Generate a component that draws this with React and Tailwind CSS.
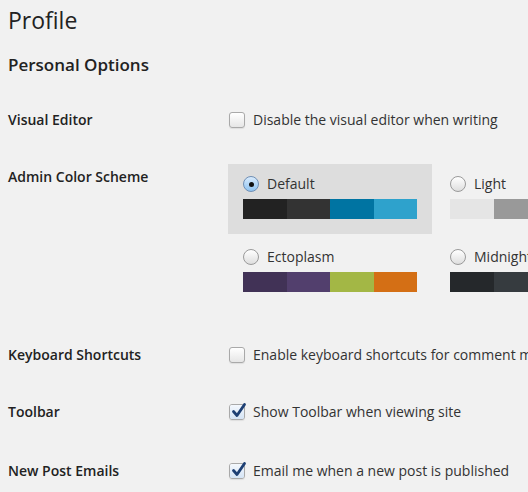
import React from "react";

const schemes = [
  [
    { name: "Default", checked: true, colors: ["#222222", "#333333", "#0074a2", "#2ea2cc"] },
    { name: "Light", colors: ["#e5e5e5", "#999999", "#d64e07", "#04a4cc"] },
  ],
  [
    { name: "Ectoplasm", colors: ["#413256", "#523f6d", "#a3b745", "#d46f15"] },
    { name: "Midnight", colors: ["#25282b", "#363b3f", "#69a8bb", "#e14d43"] },
  ],
];

function Checkbox({ checked }) {
  return (
    <span className="relative ml-[1px] inline-block h-[16px] w-[16px] shrink-0 rounded-[3px] border border-[#a9a9a9] bg-gradient-to-b from-white to-[#e6e6e6] shadow-[0_1px_1px_rgba(0,0,0,0.08)]">
      {checked && (
        <>
          <span className="absolute inset-0 rounded-[2px] bg-gradient-to-b from-[#f4f8fd] to-[#d5e4f5]" />
          <svg className="absolute left-[1px] top-[-3px]" width="16" height="17" viewBox="0 0 16 17">
            <path d="M2.5 9.5 L6 13.5 L13.5 2.5" fill="none" stroke="#1d3f73" strokeWidth="2.8" strokeLinecap="round" strokeLinejoin="round" />
          </svg>
        </>
      )}
    </span>
  );
}

function Radio({ checked }) {
  return checked ? (
    <span className="flex h-[16px] w-[16px] shrink-0 items-center justify-center rounded-full border border-[#6f8fb5] bg-gradient-to-b from-[#d9ebfc] to-[#8ec3f1]">
      <span className="h-[5px] w-[5px] rounded-full bg-[#111]" />
    </span>
  ) : (
    <span className="h-[16px] w-[16px] shrink-0 rounded-full border border-[#9a9a9a] bg-gradient-to-b from-white to-[#dedede]" />
  );
}

function ColorOption({ name, colors, checked }) {
  return (
    <div className={`w-[204px] shrink-0 px-[15px] pt-[12px] pb-[15px] ${checked ? "bg-[#dddddd]" : ""}`}>
      <div className="flex h-[16px] items-center gap-[8px]">
        <Radio checked={checked} />
        <span className="text-[14px] leading-[16px] text-[#333]">{name}</span>
      </div>
      <div className="mt-[7px] flex h-[20px] w-[174px]">
        {colors.map((c, i) => (
          <div key={i} className="h-full flex-1" style={{ background: c }} />
        ))}
      </div>
    </div>
  );
}

function Row({ label, children, className = "", labelClass = "" }) {
  return (
    <div className={`flex items-start ${className}`}>
      <div className={`w-[220px] shrink-0 text-[14px] font-semibold leading-[18px] text-[#222] ${labelClass}`}>{label}</div>
      <div className="min-w-0">{children}</div>
    </div>
  );
}

function CheckRow({ checked, text }) {
  return (
    <div className="flex h-[18px] items-center gap-[8px] whitespace-nowrap">
      <Checkbox checked={checked} />
      <span className="text-[14px] leading-[18px] text-[#333]">{text}</span>
    </div>
  );
}

export default function App() {
  return (
    <div
      className="h-[492px] w-[528px] overflow-hidden bg-[#f1f1f1] pl-[8px]"
      style={{ fontFamily: '"Open Sans", "Noto Sans", sans-serif' }}
    >
      <h1 className="pt-[6px] text-[23px] font-normal leading-[29px] text-[#222]">Profile</h1>
      <h3 className="mt-[19px] text-[17px] font-semibold leading-[22px] text-[#222]">Personal Options</h3>

      <Row label="Visual Editor" className="mt-[35px]">
        <CheckRow text="Disable the visual editor when writing" />
      </Row>

      <Row label="Admin Color Scheme" className="mt-[35px]" labelClass="mt-[4px]">
        <div className="flex w-max flex-col gap-[3px]">
          {schemes.map((row, r) => (
            <div key={r} className="flex gap-[3px]">
              {row.map((s) => (
                <ColorOption key={s.name} {...s} />
              ))}
            </div>
          ))}
        </div>
      </Row>

      <Row label="Keyboard Shortcuts" className="mt-[39px]">
        <CheckRow text="Enable keyboard shortcuts for comment moderation" />
      </Row>

      <Row label="Toolbar" className="mt-[39px]">
        <CheckRow checked text="Show Toolbar when viewing site" />
      </Row>

      <Row label="New Post Emails" className="mt-[41px]">
        <CheckRow checked text="Email me when a new post is published" />
      </Row>
    </div>
  );
}
